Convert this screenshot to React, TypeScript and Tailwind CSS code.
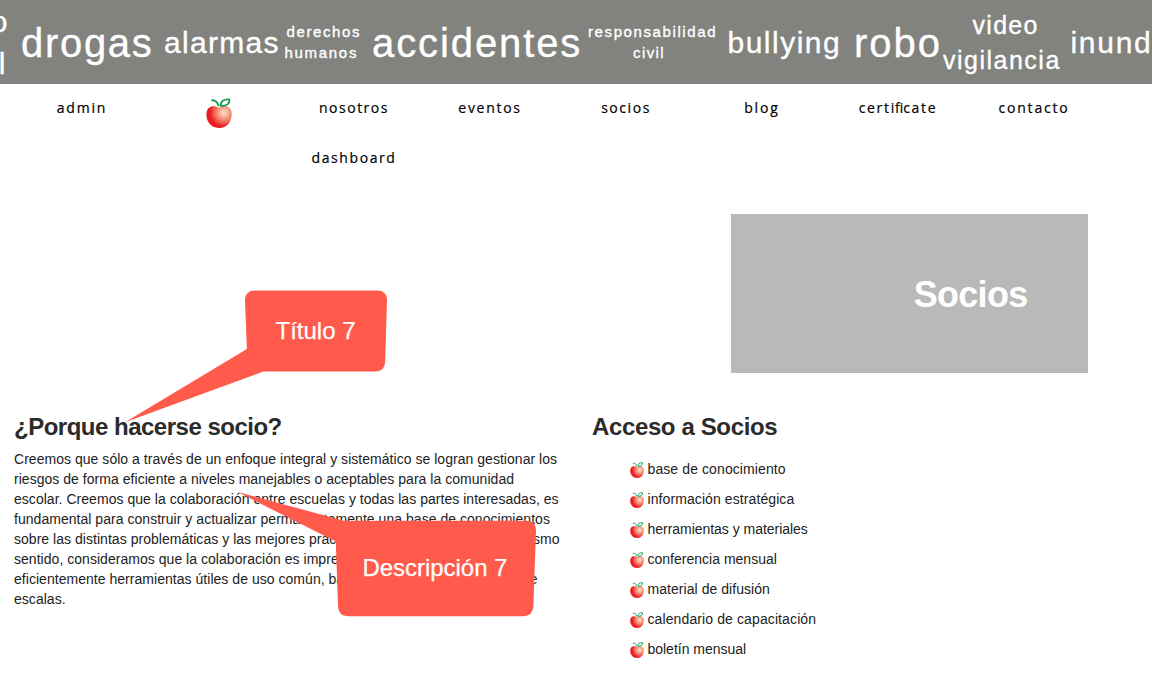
type Line = { text: string; className: string };
type Topic = { box: string; lines: Line[] };

const topics: Topic[] = [
  {
    box: 'w-[20px] pt-[2px] text-[30px] items-end',
    lines: [
      { text: 'trabajo', className: 'tracking-[1.5px] mr-[11px]' },
      { text: 'infantil', className: 'tracking-[1.5px] mr-[13px]' },
    ],
  },
  { box: 'w-[144px] pt-[2px] text-[40px] pl-[1px] items-start', lines: [{ text: 'drogas', className: 'tracking-[1.7px]' }] },
  { box: 'w-[121px] pt-[2px] text-[30px] items-start', lines: [{ text: 'alarmas', className: 'tracking-[1.3px]' }] },
  {
    box: 'w-[88px] text-[15px] items-start',
    lines: [
      { text: 'derechos', className: 'tracking-[1.6px] ml-[1.5px]' },
      { text: 'humanos', className: 'tracking-[1.7px] -ml-[0.5px]' },
    ],
  },
  { box: 'w-[215px] pt-[2px] text-[40px] items-start -ml-px', lines: [{ text: 'accidentes', className: 'tracking-[1.9px]' }] },
  {
    box: 'w-[140px] text-[15px] items-start pl-[1px]',
    lines: [
      { text: 'responsabilidad', className: 'tracking-[1.6px]' },
      { text: 'civil', className: 'tracking-[1.4px] ml-[45px]' },
    ],
  },
  { box: 'w-[127px] pt-[2px] text-[30px] items-start pl-[0.5px]', lines: [{ text: 'bullying', className: 'tracking-[1.5px]' }] },
  { box: 'w-[89px] pt-[2px] text-[40px] items-start', lines: [{ text: 'robo', className: 'tracking-[2px]' }] },
  {
    box: 'w-[127.5px] pt-[2px] text-[25px] items-start',
    lines: [
      { text: 'video', className: 'tracking-[1.3px] ml-[29.5px]' },
      { text: 'vigilancia', className: 'tracking-[1.5px]' },
    ],
  },
  { box: 'w-[200px] pt-[2px] text-[30px] items-start', lines: [{ text: 'inundaciones', className: 'tracking-[1.7px]' }] },
];

const paragraph: { left: string; right?: string }[] = [
  { left: 'Creemos que sólo a través de un enfoque integral y sistemático se logran gestionar los' },
  { left: 'riesgos de forma eficiente a niveles manejables o aceptables para la comunidad' },
  { left: 'escolar. Creemos que la colaboración entre escuelas y todas las partes interesadas, es' },
  { left: 'fundamental para construir y actualizar permanentemente una base de conocimientos' },
  { left: 'sobre las distintas problemáticas y las mejores prácticas de seguridad.', right: 'En este mismo' },
  { left: 'sentido, consideramos que la colaboración es imprescindible para crear' },
  { left: 'eficientemente herramientas útiles de uso común, bajando costos', right: 'a mayores de' },
  { left: 'escalas.' },
];

const resources: Line[] = [
  { text: 'base de conocimiento', className: 'tracking-[0.1px]' },
  { text: 'información estratégica', className: 'tracking-[0.09px]' },
  { text: 'herramientas y materiales', className: 'tracking-[-0.03px]' },
  { text: 'conferencia mensual', className: 'tracking-[0.01px]' },
  { text: 'material de difusión', className: 'tracking-[0.05px]' },
  { text: 'calendario de capacitación', className: 'tracking-[0.11px]' },
  { text: 'boletín mensual', className: 'tracking-[-0.02px]' },
];

function Apple({ id, className }: { id: string; className: string }) {
  return (
    <svg viewBox="0 0 26 30" className={className} preserveAspectRatio="none" aria-hidden="true">
      <defs>
        <radialGradient id={id} gradientUnits="userSpaceOnUse" cx="18" cy="14.8" r="14">
          <stop offset="0" stopColor="#fcdccf" />
          <stop offset="0.25" stopColor="#f8b9a0" />
          <stop offset="0.65" stopColor="#f07057" />
          <stop offset="1" stopColor="#ec1c24" />
        </radialGradient>
      </defs>
      <path
        d="M12.8 9.9C10.6 7.7 5.2 7.4 2.4 10.3C-0.6 13.5 0 20.3 2.6 24.6C4.8 28.2 8.2 29.9 13 29.9C17.8 29.9 21.3 28 23.4 24.4C25.9 20.2 26.8 13.4 23.8 10.3C20.9 7.3 15.3 7.5 12.8 9.9Z"
        fill={`url(#${id})`}
      />
      <path
        d="M5.4 2.3C9.2 1.8 11.4 3.8 12.8 8.2M14.8 8.4C14.4 3.4 17.4 0.9 23.4 1.5C23.8 5.6 20.6 8.2 15.4 7.8"
        fill="none"
        stroke="#169a4d"
        strokeWidth="1.8"
      />
    </svg>
  );
}

function TopicBar() {
  return (
    <header className="flex h-[84px] items-center overflow-hidden bg-[#82827f] leading-[1.4] text-white [-webkit-text-stroke:0.35px_white]">
      {topics.map((topic) => (
        <div key={topic.lines[0].text} className={`flex shrink-0 flex-col whitespace-nowrap ${topic.box}`}>
          {topic.lines.map((line) => (
            <span key={line.text} className={line.className}>{line.text}</span>
          ))}
        </div>
      ))}
    </header>
  );
}

function Nav() {
  const item = 'h-[50px] leading-[48px]';
  return (
    <nav className="ml-[14px] grid w-[1088px] grid-cols-8 text-center font-['Open_Sans',sans-serif] text-[14px] text-black [-webkit-text-stroke:0.2px_black]">
      <div className={`${item} tracking-[1.8px]`}>admin</div>
      <div className="flex justify-center pt-[14px] pl-[1.5px]">
        <Apple id="apple-nav" className="h-[30px] w-[26px]" />
      </div>
      <div>
        <div className={`${item} tracking-[1.5px]`}>nosotros</div>
        <div className={`${item} tracking-[1.6px]`}>dashboard</div>
      </div>
      <div className={`${item} tracking-[1.7px]`}>eventos</div>
      <div className={`${item} tracking-[1.55px]`}>socios</div>
      <div className={`${item} tracking-[1.9px]`}>blog</div>
      <div className={`${item} tracking-[1.7px]`}>
        certi<span className="-ml-[1px] tracking-[0px]">fi</span>cate
      </div>
      <div className={`${item} tracking-[1.8px]`}>contacto</div>
    </nav>
  );
}

function Callouts() {
  return (
    <>
      <div className="absolute top-[290px] left-[125px] h-[133px] w-[263px]">
        <svg viewBox="125 290 263 133" className="h-full w-full" aria-hidden="true">
          <path
            d="M255 290.5H377Q387.2 290.5 387 300.5L385.2 361.5Q384.8 371.5 375 371.5H263.5L125 422.3L246.9 349L245 300.5Q244.8 290.5 255 290.5Z"
            fill="#ff5a4b"
          />
        </svg>
        <span className="absolute top-[23px] left-[150.5px] text-[24px] leading-[36px] whitespace-nowrap text-white [-webkit-text-stroke:0.25px_white]">
          Título 7
        </span>
      </div>
      <div className="absolute top-[491px] left-[237px] h-[126px] w-[300px]">
        <svg viewBox="237 491 300 126" className="h-full w-full" aria-hidden="true">
          <path
            d="M237 491.8L344 520.7H526Q536.2 520.7 536 530.7L533.4 606Q533 616.2 523 616.2H348Q338.3 616.2 338 606L335.8 541.5Z"
            fill="#ff5a4b"
          />
        </svg>
        <span className="absolute top-[59px] left-[125.5px] text-[24px] leading-[36px] tracking-[-0.04px] whitespace-nowrap text-white [-webkit-text-stroke:0.25px_white]">
          Descripción 7
        </span>
      </div>
    </>
  );
}

export default function App() {
  return (
    <div className="relative h-[674px] w-[1152px] overflow-hidden bg-white font-['Liberation_Sans',Arial,sans-serif] text-[#222]">
      <TopicBar />
      <Nav />
      <div className="mt-[30px] mr-[64px] ml-auto flex h-[159px] w-[357px] items-center justify-end bg-[#b9b9b9] pt-[2px] pr-[60.5px]">
        <h1 className="text-[36px] leading-[40px] font-bold tracking-[-0.7px] text-white">Socios</h1>
      </div>
      <main className="mt-[34px] flex pl-[14px]">
        <section className="w-[578px]">
          <h2 className="text-[24px] leading-[40px] font-bold tracking-[-0.5px] text-[#2b2b2b]">¿Porque hacerse socio?</h2>
          <div className="mt-[2px] text-[14px] leading-[20px] tracking-[0.035px] whitespace-nowrap">
            {paragraph.map((line, index) => (
              <p key={index} className={`flex justify-between ${index === 6 ? 'w-[523.5px]' : 'w-[545.5px]'}`}>
                <span>{line.left}</span>
                {line.right && <span>{line.right}</span>}
              </p>
            ))}
          </div>
        </section>
        <section>
          <h2 className="text-[24px] leading-[40px] font-bold tracking-[-0.37px] text-[#2b2b2b]">Acceso a Socios</h2>
          <ul className="mt-[7px] ml-[38px]">
            {resources.map((resource, index) => (
              <li key={resource.text} className="flex h-[30px] items-center gap-[3.5px] text-[14px] leading-[20px]">
                <Apple id={`apple-${index}`} className="mt-[2px] h-[16px] w-[14px]" />
                <span className={resource.className}>{resource.text}</span>
              </li>
            ))}
          </ul>
        </section>
      </main>
      <Callouts />
    </div>
  );
}
